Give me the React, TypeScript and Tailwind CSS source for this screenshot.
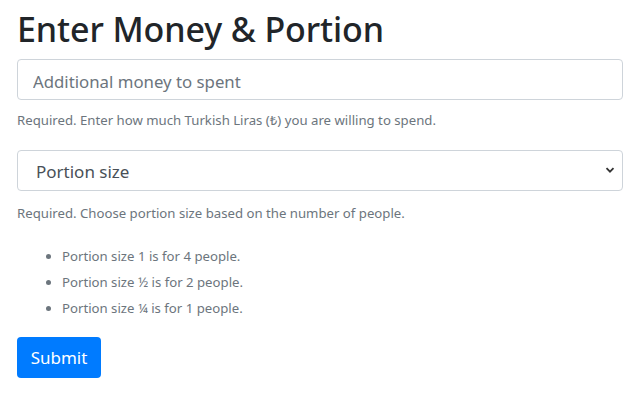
import React from 'react';

const App: React.FC = () => {
  const notes = [
    'Portion size 1 is for 4 people.',
    'Portion size ½ is for 2 people.',
    'Portion size ¼ is for 1 people.',
  ];

  return (
    <div className="bg-white w-[640px] h-[403px] px-[17px] font-['Noto_Sans',sans-serif] text-[#212529]">
      <h1 className="mt-[9px] font-medium text-[34px] leading-[40px] tracking-[-0.1px]">Enter Money &amp; Portion</h1>

      <input
        type="text"
        placeholder="Additional money to spent"
        className="block mt-[10px] pt-[3px] px-[15px] border border-[#ced4da] rounded-[4px] w-[606px] h-[41px] text-[#495057] text-[16.8px] placeholder:text-[#6c757d] outline-none"
      />
      <p className="mt-[11px] text-[#6c757d] text-[13.2px] leading-[19.5px]">
        Required. Enter how much Turkish Liras (₺) you are willing to spend.
      </p>

      <div className="relative mt-[19px] w-[606px]">
        <select className="block bg-white pt-[3px] px-[18px] border border-[#ced4da] rounded-[4px] w-full h-[41px] text-[#495057] text-[17px] appearance-none outline-none">
          <option>Portion size</option>
        </select>
        <svg className="top-1/2 right-[8px] absolute -translate-y-1/2 pointer-events-none" width="10" height="10" viewBox="0 0 10 10">
          <path d="M1.5 3.2 L5 6.7 L8.5 3.2" fill="none" stroke="#333" strokeWidth="1.8" />
        </svg>
      </div>
      <p className="mt-[13px] text-[#6c757d] text-[13.2px] leading-[19.5px]">
        Required. Choose portion size based on the number of people.
      </p>

      <ul className="mt-[20px] pl-[45px] text-[#6c757d] text-[13.2px] leading-[26px] list-disc">
        {notes.map((n) => (
          <li key={n}>{n}</li>
        ))}
      </ul>

      <button className="flex justify-center items-center bg-[#007bff] mt-[16px] rounded-[4px] w-[84px] h-[41px] text-[17px] text-white">
        Submit
      </button>
    </div>
  );
};

export default App;
